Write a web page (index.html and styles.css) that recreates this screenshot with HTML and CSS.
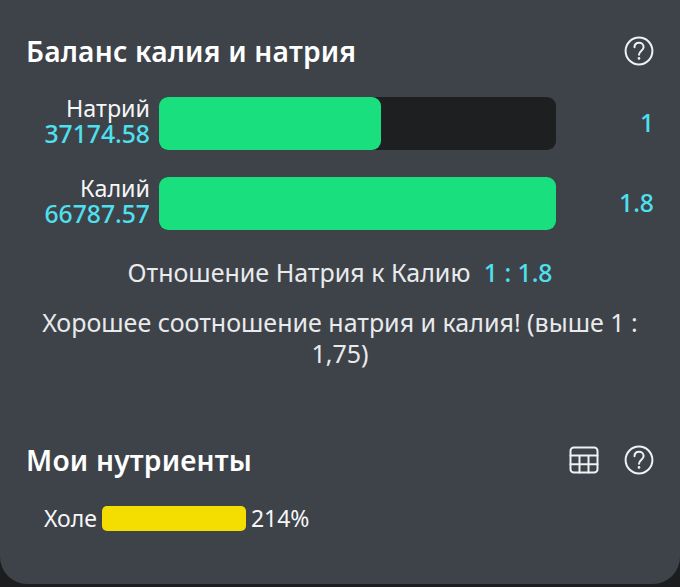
FILE: index.html
```html
<!DOCTYPE html>
<html lang="ru">
<head>
    <meta charset="UTF-8">
    <meta name="viewport" content="width=device-width, initial-scale=1.0">
    <title>Баланс калия и натрия</title>
    <link rel="stylesheet" href="styles.css">
</head>
<body>
    <div class="card">
        <div class="header">
            <h2>Баланс калия и натрия</h2>
            <div class="icons">
                <svg class="icon" viewBox="0 0 30 30">
                    <circle cx="15" cy="15" r="13.4"/>
                    <path d="M10.5 11.2c0-2.7 1.9-4.5 4.5-4.5s4.6 1.8 4.6 4.3c0 3.6-4.6 3.8-4.6 7.8"/>
                    <circle class="dot" cx="15" cy="22.4" r="1.3"/>
                </svg>
            </div>
        </div>
        <div class="balance">
            <div class="row">
                <div class="label">
                    <span>Натрий</span>
                    <b>37174.58</b>
                </div>
                <div class="track"><div class="fill" style="width: 56%"></div></div>
                <b class="value one">1</b>
            </div>
            <div class="row">
                <div class="label">
                    <span>Калий</span>
                    <b>66787.57</b>
                </div>
                <div class="track"><div class="fill" style="width: 100%"></div></div>
                <b class="value">1.8</b>
            </div>
        </div>
        <p class="ratio">Отношение Натрия к Калию <b>1 : 1.8</b></p>
        <p class="message">Хорошее соотношение натрия и калия! (выше 1 : 1,75)</p>
        <div class="header">
            <h2>Мои нутриенты</h2>
            <div class="icons">
                <svg class="icon" viewBox="0 0 30 30">
                    <rect x="1.5" y="2.4" width="27" height="25.2" rx="3.4"/>
                    <path d="M1.5 10.6h27M1.5 19.2h27M10.5 10.6v17M19.5 10.6v17"/>
                </svg>
                <svg class="icon" viewBox="0 0 30 30">
                    <circle cx="15" cy="15" r="13.4"/>
                    <path d="M10.5 11.2c0-2.7 1.9-4.5 4.5-4.5s4.6 1.8 4.6 4.3c0 3.6-4.6 3.8-4.6 7.8"/>
                    <circle class="dot" cx="15" cy="22.4" r="1.3"/>
                </svg>
            </div>
        </div>
        <div class="nutrient">
            <span>Холе</span>
            <div class="nutrient-bar"></div>
            <span>214%</span>
        </div>
    </div>
</body>
</html>
```
FILE: styles.css
```css
*{
    padding: 0;
    margin: 0;
    box-sizing: border-box;
}
body{
    background: #1b1d1f;
    color: #f5f6f7;
    font-family: 'Noto Sans', 'Open Sans', sans-serif;
    overflow: hidden;
}
b{
    color: #4ee0ee;
    font-weight: 550;
}
.card{
    height: 584px;
    padding: 31px 26px 0;
    background: #3e4249;
    border-radius: 0 0 27px 27px;
}
.header{
    display: flex;
    justify-content: space-between;
    align-items: center;
    height: 40px;
}
.header h2{
    font-size: 28.2px;
    line-height: 40px;
    font-weight: 600;
    letter-spacing: .2px;
    color: white;
    margin-top: -1px;
}
.icons{
    display: flex;
    gap: 25px;
}
.icon{
    width: 30px;
    height: 30px;
    fill: none;
    stroke: #f0f1f3;
    stroke-width: 2;
    stroke-linecap: round;
}
.icon .dot{
    fill: #f0f1f3;
    stroke: none;
}
.balance{
    margin-top: 26px;
}
.row{
    display: flex;
    height: 53px;
    margin-bottom: 27px;
}
.label{
    display: flex;
    flex-direction: column;
    width: 124px;
    margin: -1px 9px 0 0;
    text-align: right;
}
.label span{
    font-size: 23.3px;
    line-height: 25px;
}
.label b{
    font-size: 24.7px;
    line-height: 25px;
}
.track{
    width: 397px;
    background: #1d1f21;
    border-radius: 9px;
}
.fill{
    height: 100%;
    background: #19df7f;
    border-radius: 9px;
}
.value{
    flex: 1;
    text-align: right;
    font-size: 24.7px;
    line-height: 52px;
}
.ratio{
    margin-top: -2px;
    text-align: center;
    font-size: 25px;
    line-height: 34px;
    color: #e9eaec;
}
.ratio b{
    margin-left: 7px;
    font-size: 24.7px;
}
.message{
    margin: 17px 0 71px;
    text-align: center;
    font-size: 25px;
    line-height: 31px;
    color: #e9eaec;
}
.nutrient{
    display: flex;
    align-items: center;
    gap: 5px;
    height: 25px;
    margin: 26px 0 0 17px;
    font-size: 23px;
}
.nutrient span{
    margin-top: -1px;
}
.nutrient-bar{
    width: 144px;
    height: 25px;
    background: #f4dd00;
    border-radius: 5px;
}
.nutrient span:first-child{
    padding-left: 1px;
}
```
